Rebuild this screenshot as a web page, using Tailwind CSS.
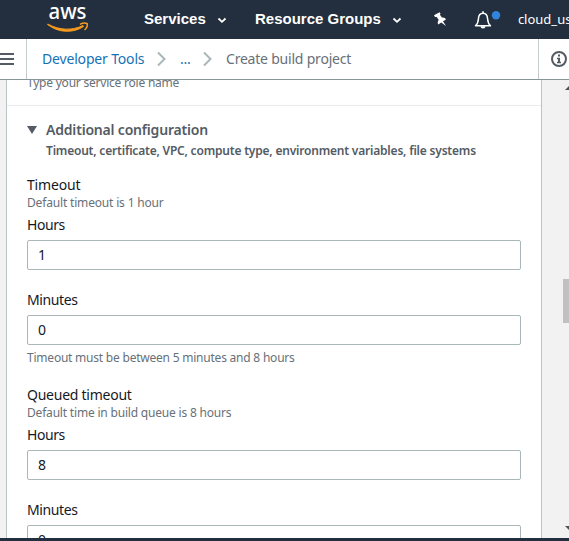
<!DOCTYPE html>
<html lang="en">
<head>
<meta charset="utf-8">
<title>Create build project</title>
<script src="https://cdn.jsdelivr.net/npm/@tailwindcss/browser@4"></script>
</head>
<body class="w-[569px] h-[541px] overflow-hidden flex flex-col bg-[#f2f2f2] font-['Noto_Sans','Open_Sans',sans-serif] text-[14px] leading-5 text-[#16191f] whitespace-nowrap">
<header class="h-[39px] shrink-0 bg-[#232f3e] text-white flex items-center overflow-hidden">
  <svg class="ml-[46px] w-[44px] h-[34px] shrink-0 -mt-1" viewBox="0 -4 44 34">
    <text x="2.500" y="14.200" textLength="38" lengthAdjust="spacingAndGlyphs" font-family="Noto Sans, sans-serif" font-size="22" font-weight="500" fill="#fff">aws</text>
    <path d="M1.500 19.500C12 27.800 27 28.700 37.500 21.500L37 20.500C26 25.800 13 25.300 1.800 19Z" fill="#f79a1e" stroke="#f79a1e" stroke-width=".9"/>
    <path d="M34 19.300C36.500 18 40 18 41.200 18.700C41.500 20.800 40.500 23.500 38.500 25" fill="none" stroke="#f79a1e" stroke-width="1.500"/>
  </svg>
  <span class="ml-[54px] w-[61px] font-bold text-[15px] font-['Liberation_Sans',sans-serif] -mt-[2px]">Services</span>
  <svg class="ml-[12px] mt-[2px] w-[10px] h-[7px] shrink-0" viewBox="0 0 10 7"><path d="M1.500 1.500L5 4.800L8.500 1.500" fill="none" stroke="#fff" stroke-width="1.800"/></svg>
  <span class="ml-[28px] w-[126px] font-bold text-[15px] font-['Liberation_Sans',sans-serif] -mt-[2px]">Resource Groups</span>
  <svg class="ml-[11px] mt-[2px] w-[10px] h-[7px] shrink-0" viewBox="0 0 10 7"><path d="M1.500 1.500L5 4.800L8.500 1.500" fill="none" stroke="#fff" stroke-width="1.800"/></svg>
  <svg class="ml-[31px] w-[14px] h-[15px] shrink-0" viewBox="0 0 14 15"><path d="M1 3.200L6.500 .2L7.600 1.800L6.900 2.700L8.900 5.600C10.600 5 12.400 6 13 7.500L10 9.300L13 14L8.300 10.600L5.200 12.600C4.400 10.800 4.700 9.200 5.700 8L3.800 4.900L2 5Z" fill="#fff"/></svg>
  <svg class="ml-[26px] w-[28px] h-[20px] shrink-0" viewBox="0 0 28 20"><path d="M2.500 15.800C5 13.700 5.200 12 5.400 9C5.600 5.500 7.300 3.300 10 3.300S14.400 5.500 14.600 9C14.800 12 15 13.700 17.500 15.800Z" fill="none" stroke="#fff" stroke-width="1.500" stroke-linejoin="round"/><path d="M10 3.500V1.200" stroke="#fff" stroke-width="1.600"/><path d="M7.500 16.300a2.500 2.300 0 0 0 5 0Z" fill="#fff"/><circle cx="23" cy="5.200" r="4.200" fill="#3184dc"/></svg>
  <span class="ml-[17px] text-[13px] -mt-px">cloud_user</span>
</header>
<nav class="h-[41px] shrink-0 bg-white border-b border-[#879596] flex items-center text-[#687078]">
  <div class="w-[27px] h-full border-r border-[#c5cccd] flex flex-col justify-center gap-[3px] shrink-0">
    <i class="block w-[14px] h-[2px] bg-[#545b64]"></i><i class="block w-[14px] h-[2px] bg-[#545b64]"></i><i class="block w-[14px] h-[2px] bg-[#545b64]"></i>
  </div>
  <span class="ml-[15px] w-[102px] text-[#1672b5] tracking-[-0.17px]">Developer Tools</span>
  <svg class="ml-[13px] w-[9px] h-4 shrink-0" viewBox="0 0 9 16"><path d="M1 1.500L7.500 8L1 14.500" fill="none" stroke="#aab7b8" stroke-width="2"/></svg>
  <span class="ml-[14px] w-[12px] text-[#1672b5] tracking-[-0.2px]">...</span>
  <svg class="ml-[11px] w-[9px] h-4 shrink-0" viewBox="0 0 9 16"><path d="M1 1.500L7.500 8L1 14.500" fill="none" stroke="#aab7b8" stroke-width="2"/></svg>
  <span class="ml-[14px] tracking-[-0.21px]">Create build project</span>
  <div class="ml-auto w-[31px] h-full border-l border-[#c5cccd] flex items-center shrink-0">
    <svg class="ml-[12px] w-4 h-4 shrink-0" viewBox="0 0 16 16"><circle cx="8" cy="8" r="7" fill="none" stroke="#545b64" stroke-width="2"/><path d="M7 3.500h2v2H7zM6 6.800h3v4h1v1.400H6v-1.400h1V8.200H6z" fill="#545b64"/></svg>
  </div>
</nav>
<div class="flex h-[458px] shrink-0 overflow-hidden">
  <main class="ml-[6px] w-[536px] shrink-0 bg-white border-x border-[#bcc3c4]">
    <div class="h-[26px] border-b border-[#eaeded] pl-5"><p class="-mt-[6px] text-[12px] leading-[18px] text-[#687078] tracking-[-0.22px] float-left">Type your service role name</p></div>
    <div class="pl-5 pt-[14px] pr-5">
      <div class="h-5 flex items-center font-semibold text-[#545b64]">
        <svg class="w-[10px] h-2 mr-[9px]" viewBox="0 0 10 8"><path d="M0 0H10L5 8Z" fill="#545b64"/></svg>
        <h2 class="tracking-[-0.19px]">Additional configuration</h2>
      </div>
      <p class="pl-[19px] mt-px h-5 text-[12px] leading-5 font-semibold text-[#545b64] tracking-[-0.2px]">Timeout, certificate, VPC, compute type, environment variables, file systems</p>
      <div class="mt-[14px] tracking-[-0.18px]">Timeout</div>
      <p class="text-[12px] leading-4 text-[#687078] tracking-[-0.17px]">Default timeout is 1 hour</p>
      <div class="mt-1 tracking-[-0.45px]">Hours</div>
      <div class="mt-[5px] h-[30px] border border-[#aab7b8] rounded-[2px] px-[10px] leading-7">1</div>
      <div class="mt-5 tracking-[-0.4px]">Minutes</div>
      <div class="mt-[5px] h-[30px] border border-[#aab7b8] rounded-[2px] px-[10px] leading-7">0</div>
      <p class="mt-[5px] text-[12px] leading-4 text-[#687078] tracking-[-0.22px]">Timeout must be between 5 minutes and 8 hours</p>
      <div class="mt-[19px] tracking-[-0.25px]">Queued timeout</div>
      <p class="text-[12px] leading-4 text-[#687078] tracking-[-0.19px]">Default time in build queue is 8 hours</p>
      <div class="mt-1 tracking-[-0.45px]">Hours</div>
      <div class="mt-[5px] h-[30px] border border-[#aab7b8] rounded-[2px] px-[10px] leading-7">8</div>
      <div class="mt-5 tracking-[-0.4px]">Minutes</div>
      <div class="mt-[5px] h-[30px] border border-[#aab7b8] rounded-[2px] px-[10px] leading-7">0</div>
    </div>
  </main>
  <div class="flex-1 flex flex-col items-end">
    <svg class="w-[5px] h-3 shrink-0" viewBox="0 0 5 12"><path d="M1 10L5 6V10Z" fill="#505050"/></svg>
    <div class="w-[6px] h-[44px] shrink-0 bg-[#c1c1c1] mt-[187px] mb-auto"></div>
    <svg class="w-[5px] h-3 shrink-0" viewBox="0 0 5 12"><path d="M1 0H5V4Z" fill="#505050"/></svg>
  </div>
</div>
<footer class="h-[3px] shrink-0 bg-[#232f3e]"></footer>
</body>
</html>
